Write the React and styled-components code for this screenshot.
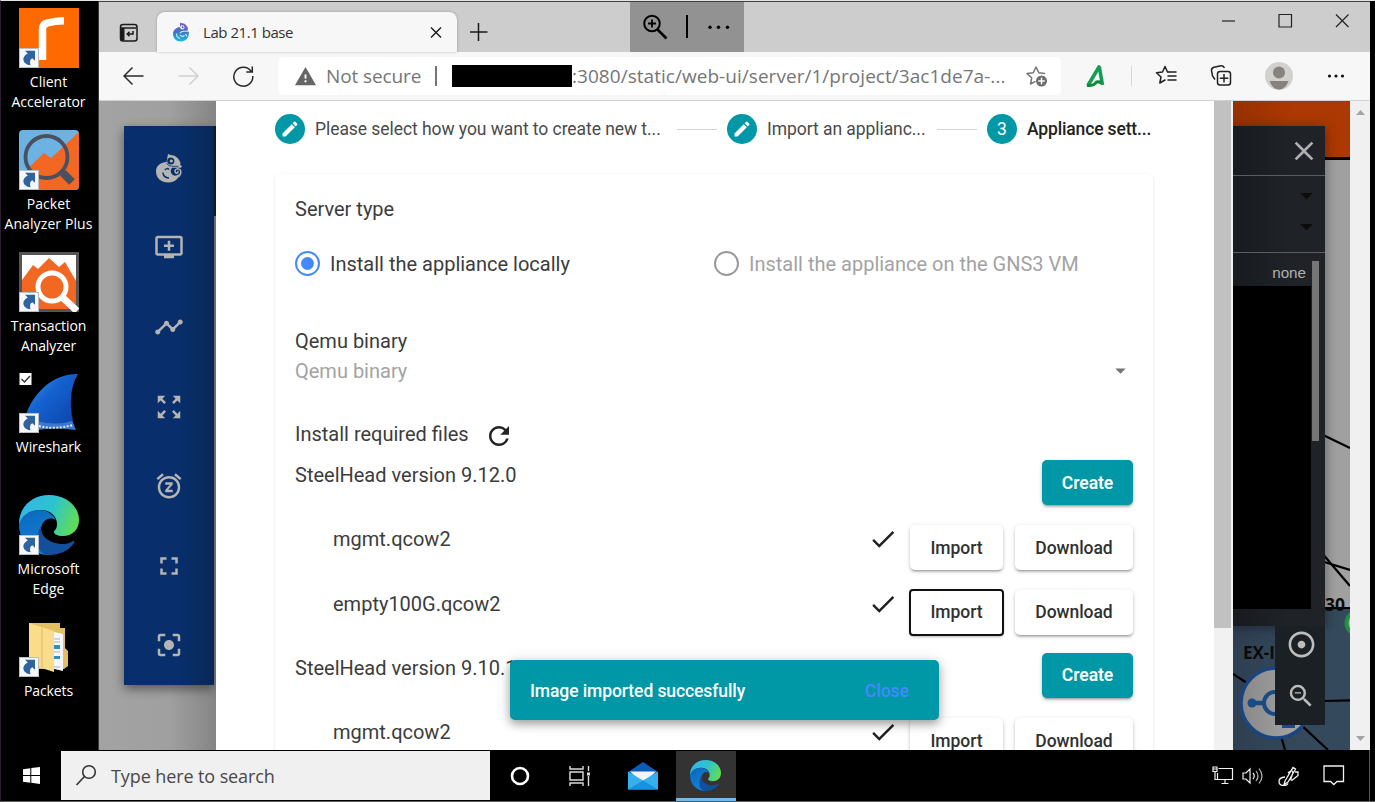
import React from "react";
import styled, { createGlobalStyle, css } from "styled-components";
import {
  MdEdit,
  MdRefresh,
  MdDone,
  MdAddToQueue,
  MdTimeline,
  MdZoomOutMap,
  MdSnooze,
  MdFullscreen,
  MdCenterFocusStrong,
  MdAdjust,
  MdZoomOut,
  MdClose,
  MdArrowDropDown,
  MdWarning,
} from "react-icons/md";

const TEAL = "#0097a7";
const SYSTEM_FONT = '"Open Sans", "Noto Sans", sans-serif';

const GlobalStyle = createGlobalStyle`
  * { box-sizing: border-box; }
  body { margin: 0; background: #000; overflow: hidden; }
  button { font: inherit; border: 0; padding: 0; background: none; }
  svg { display: block; flex: none; }
`;

const Screen = styled.div`
  width: 1375px;
  height: 802px;
  display: flex;
  flex-direction: column;
  background: #000;
  border-top: 1px solid #e4e4e4;
  border-left: 1px solid #2b1c2f;
  border-bottom: 1px solid #5c5c5c;
  font-family: ${SYSTEM_FONT};
`;

const Workspace = styled.div`
  display: flex;
  height: 749px;
`;

/* Desktop shortcuts */

const Desktop = styled.div`
  width: 98px;
  padding: 7px 2px 0 0;
  border-right: 1px solid #3a3a3a;
  flex: none;
`;

const Shortcut = styled.div`
  height: 121.8px;
  display: flex;
  flex-direction: column;
  align-items: center;
`;

const ShortcutIcon = styled.div`
  position: relative;
  width: 60px;
  height: 60px;
`;

const ShortcutArrow = styled.svg`
  position: absolute;
  left: 0;
  bottom: 0;
`;

const ShortcutLabel = styled.div`
  margin-top: 4px;
  color: #fff;
  font-size: 14px;
  line-height: 20px;
  letter-spacing: ${(p) => p.$spacing || "0"};
  text-align: center;
  white-space: pre;
`;

/* Browser window */

const Browser = styled.div`
  width: 1271px;
  display: flex;
  flex-direction: column;
  border-top: 1px solid #3c423c;
  background: #f7f7f7;
`;

const TitleBar = styled.div`
  height: 50px;
  display: flex;
  background: #cdcdcd;
`;

const TabActions = styled.div`
  width: 58px;
  display: flex;
  align-items: center;
  justify-content: center;
  padding: 11px 0 0 2px;
`;

const Tab = styled.div`
  width: 300px;
  height: 40px;
  margin-top: 10px;
  padding: 0 15px;
  display: flex;
  align-items: center;
  background: #f7f7f7;
  border-radius: 8px 8px 0 0;
  box-shadow: 0 0 3px rgba(0, 0, 0, 0.25);
`;

const TabTitle = styled.span`
  margin-left: 13px;
  flex: 1;
  padding-bottom: 1px;
  font-size: 15px;
  letter-spacing: -0.45px;
  color: #333;
`;

const NewTab = styled.div`
  padding: 20px 0 0 12px;
  width: 173px;
`;

const ZoomWidget = styled.div`
  width: 114px;
  height: 50px;
  background: #929292;
`;

const WindowButtons = styled.div`
  flex: 1;
  display: flex;
  justify-content: flex-end;
  align-items: flex-start;
  padding: 11px 20px 0 0;
  gap: 41px;
`;

const AddressRow = styled.div`
  height: 49px;
  display: flex;
  align-items: center;
  border-bottom: 1px solid #d2d2d2;
`;

const NavButtons = styled.div`
  width: 179px;
  display: flex;
  padding-left: 24px;
  gap: 33px;
`;

const AddressField = styled.div`
  width: 783px;
  height: 38px;
  padding: 0 12px 0 16px;
  display: flex;
  align-items: center;
  background: #fff;
  border-radius: 5px;
  font-size: 19px;
  color: #767676;
`;

const SecurityLabel = styled.span`
  width: 111px;
  margin-left: 9px;
  padding-right: 11px;
  border-right: 2px solid #767676;
  height: 20px;
  line-height: 20px;
  letter-spacing: -0.1px;
  white-space: nowrap;
`;

const Redaction = styled.span`
  width: 120px;
  height: 22px;
  margin: 0 0 1px 15px;
  background: #000;
`;

const Url = styled.span`
  flex: 1;
  white-space: nowrap;
  letter-spacing: 0.04px;
`;

const ToolbarIcons = styled.div`
  flex: 1;
  display: flex;
  align-items: center;
  padding-left: 24px;
`;

const ToolbarItem = styled.span`
  margin-left: ${(p) => p.$gap || 31}px;
`;

/* Page */

const Page = styled.div`
  height: 649px;
  display: flex;
  overflow: hidden;
`;

const MapLeft = styled.div`
  width: 117px;
  padding: 25px 0 0 25px;
  display: flex;
  align-items: flex-start;
  background: linear-gradient(90deg, #a3a3a3 0, #a0a0a0 60%, #858585 100%);
`;

const SideMenu = styled.nav`
  width: 90px;
  height: 559px;
  padding-top: 2px;
  display: flex;
  flex-direction: column;
  color: #b4b4b4;
  background: linear-gradient(90deg, #082f6c 60%, #082858 100%);
  border-right: 1px solid #0a2450;
  box-shadow: 0 4px 10px rgba(0, 0, 0, 0.45);
`;

const MapEdge = styled.div`
  width: 2px;
  height: 90px;
  background: #101c24;
`;

const SideItem = styled.div`
  height: 79.6px;
  display: flex;
  align-items: center;
  justify-content: center;
`;

const Dialog = styled.main`
  position: relative;
  width: 998px;
  padding: 13px 61px 0 59px;
  background: #fff;
  overflow: hidden;
  font-family: Roboto, sans-serif;
  font-size: 20px;
  color: #3c3c3c;
`;

const Stepper = styled.div`
  height: 30px;
  display: flex;
  align-items: center;
  font-size: 17.5px;
  letter-spacing: -0.06px;
`;

const StepCircle = styled.span`
  width: 30px;
  height: 30px;
  margin-right: 10px;
  display: flex;
  align-items: center;
  justify-content: center;
  flex: none;
  border-radius: 50%;
  background: ${TEAL};
  color: #fff;
`;

const StepLabel = styled.span`
  width: ${(p) => p.$width}px;
  flex: none;
  white-space: nowrap;
  color: ${(p) => (p.$active ? "#222" : "#4a4a4a")};
  font-weight: ${(p) => (p.$active ? 500 : 400)};
  letter-spacing: ${(p) => (p.$active ? "-0.15px" : "inherit")};
`;

const StepLine = styled.span`
  width: 40px;
  height: 1px;
  margin: 0 10px 0 ${(p) => p.$before}px;
  background: #d4d4d4;
`;

const Card = styled.section`
  height: 640px;
  margin-top: 30px;
  padding: 23px 20px 0;
  border-radius: 5px;
  box-shadow: 0 1px 3px rgba(0, 0, 0, 0.14);
`;

const Line = styled.div`
  height: ${(p) => p.$height}px;
  margin-top: ${(p) => p.$top || 0}px;
  display: flex;
  align-items: center;
  color: ${(p) => (p.$muted ? "#a3a3a3" : "inherit")};
  ${(p) => p.$between && css`justify-content: space-between;`}
`;

const Reload = styled.span`
  margin: 4px 0 0 15px;
  color: #222;
`;

const SelectArrow = styled.span`
  margin-bottom: 2px;
  color: #757575;
`;

const RadioRow = styled.div`
  height: 50px;
  margin-top: 17px;
  display: grid;
  grid-template-columns: 419px 1fr;
  align-items: center;
`;

const Radio = styled.label`
  display: flex;
  align-items: center;
  gap: 10px;
  line-height: 26px;
  padding-top: 1px;
  color: ${(p) => (p.$disabled ? "#a3a3a3" : "#3c3c3c")};
`;

const RadioMark = styled.span`
  width: 25px;
  height: 25px;
  display: flex;
  align-items: center;
  justify-content: center;
  border: 2.5px solid ${(p) => (p.$checked ? "#448aff" : "#9a9a9a")};
  border-radius: 50%;
  &::after {
    content: "";
    width: 13px;
    height: 13px;
    border-radius: 50%;
    background: ${(p) => (p.$checked ? "#448aff" : "transparent")};
  }
`;

const FileRow = styled.div`
  height: 64.3px;
  display: flex;
  align-items: flex-start;
  padding-left: ${(p) => (p.$nested ? 38 : 0)}px;
`;

const FileName = styled.span`
  flex: 1;
  line-height: 30px;
`;

const RowCheck = styled.span`
  margin: 0 12px 0 0;
  color: #222;
`;

const Button = styled.button`
  width: ${(p) => p.$width}px;
  height: 45px;
  margin: ${(p) => (p.$primary ? 0 : 1)}px 0 0 ${(p) => p.$gap || 0}px;
  border-radius: 5px;
  font-size: 17.5px;
  font-weight: ${(p) => (p.$primary ? 600 : 500)};
  letter-spacing: -0.05px;
  color: ${(p) => (p.$primary ? "#fff" : "#303030")};
  background: ${(p) => (p.$primary ? TEAL : "#fff")};
  box-shadow: 0 3px 2px -2px rgba(0, 0, 0, 0.22), 0 2px 3px rgba(0, 0, 0, 0.16),
    0 1px 5px rgba(0, 0, 0, 0.12);
  ${(p) =>
    p.$focused &&
    css`
      outline: 2px solid #111;
      outline-offset: -1px;
      border-radius: 3px;
    `}
`;

const Snackbar = styled.div`
  position: absolute;
  left: 294px;
  top: 559px;
  width: 429px;
  height: 60px;
  padding: 2px 30px 0 20px;
  display: flex;
  align-items: center;
  justify-content: space-between;
  border-radius: 5px;
  background: ${TEAL};
  box-shadow: 0 4px 8px rgba(0, 0, 0, 0.3), 0 2px 16px rgba(0, 0, 0, 0.14);
  color: #fff;
  font-size: 17.5px;
  font-weight: 500;
  letter-spacing: -0.09px;
`;

const SnackAction = styled.span`
  color: #448aff;
  letter-spacing: 0;
`;

const DialogScroll = styled.div`
  width: 19px;
  padding: 0 2px 0 0;
  background: #f1f1f1;
`;

const DialogThumb = styled.div`
  height: 527px;
  background: #c1c1c1;
`;

const MapRight = styled.div`
  position: relative;
  width: 117px;
  height: 649px;
  overflow: hidden;
`;

const ConsolePanel = styled.div`
  position: absolute;
  left: 0;
  top: 25px;
  width: 92px;
  height: 500px;
  display: flex;
  flex-direction: column;
  color: #b0b0b0;
  background: linear-gradient(90deg, #171b1f, #1f2328 60%);
  box-shadow: 0 2px 12px rgba(0, 0, 0, 0.4);
`;

const ConsoleHeader = styled.div`
  height: 50px;
  padding-right: 5px;
  display: flex;
  align-items: center;
  justify-content: flex-end;
  border-bottom: 1px solid #5a5d60;
`;

const ConsoleFilters = styled.div`
  height: 77px;
  padding: 4px 3px 0 0;
  display: flex;
  flex-direction: column;
  align-items: flex-end;
  color: #0c0c0c;
  border-bottom: 1px solid #5a5d60;
`;

const ConsoleBody = styled.div`
  display: flex;
  padding-top: 8px;
`;

const ConsoleTable = styled.div`
  width: 79px;
`;

const ConsoleValue = styled.div`
  height: 25px;
  padding-right: 6px;
  text-align: right;
  line-height: 23px;
  font-family: "Liberation Sans", Arial, sans-serif;
  font-size: 15.2px;
`;

const ConsoleOutput = styled.div`
  height: 323px;
  width: 78px;
  background: #000;
`;

const ConsoleThumb = styled.div`
  width: 7px;
  height: 180px;
  background: #757575;
`;

const MapTools = styled.div`
  position: absolute;
  left: 42px;
  top: 525px;
  width: 50px;
  height: 99px;
  padding: 3px 0 0 2px;
  display: flex;
  flex-direction: column;
  align-items: center;
  gap: 21px;
  color: #bdbdbd;
  background: #1b2024;
`;

const PageScroll = styled.div`
  width: 20px;
  display: flex;
  flex-direction: column;
  justify-content: space-between;
  align-items: center;
  padding: 9px 0 9px;
  background: #f0f0f0;
`;

/* Taskbar */

const Taskbar = styled.div`
  height: 51px;
  display: flex;
  align-items: center;
  background: #000;
`;

const Start = styled.div`
  width: 60px;
  display: flex;
  justify-content: center;
`;

const Search = styled.div`
  width: 429px;
  height: 49px;
  padding-left: 14px;
  display: flex;
  align-items: center;
  gap: 13px;
  background: #f0f0f0;
  color: #484848;
  font-size: 18px;
  letter-spacing: -0.1px;
`;

const Task = styled.div`
  width: ${(p) => p.$width}px;
  height: 50px;
  display: flex;
  align-items: center;
  justify-content: center;
  ${(p) =>
    p.$active &&
    css`
      background: #333;
      border-bottom: 3px solid #76b9ed;
      padding: 3px 2px 0 0;
    `}
`;

const Tray = styled.div`
  flex: 1;
  height: 100%;
  display: flex;
  align-items: center;
  justify-content: flex-end;
  margin-right: 5px;
  padding-right: 24px;
  border-right: 1px solid #555;
`;

const TrayIcon = styled.span`
  margin-left: ${(p) => p.$gap}px;
`;

/* Drawings */

function ArrowBadge() {
  return (
    <ShortcutArrow width="20" height="20" viewBox="0 0 20 20">
      <rect x=".5" y=".5" width="19" height="19" fill="#f5f7f9" stroke="#b9bec4" />
      <path d="M6 2.800h10v10L13.300 10.200C11 11.500 10.500 13.500 11.500 17.300C4 16.500 1.500 9.500 8.800 5.600z" fill="#2e63a0" />
    </ShortcutArrow>
  );
}

function ClientArt() {
  return (
    <svg width="60" height="60" viewBox="0 0 60 60">
      <rect width="60" height="60" fill="#ff6a00" />
      <path d="M23.500 52V21q0-5 5-6Q36 13 45 12.800" fill="none" stroke="#fff" strokeWidth="7.500" strokeLinejoin="round" />
    </svg>
  );
}

function PacketArt() {
  return (
    <svg width="60" height="60" viewBox="0 0 60 60">
      <rect width="60" height="60" rx="4" fill="#6cb2e2" />
      <path d="M0 47L25 23l7 5L60 2v54q0 4-4 4H0z" fill="#f26722" />
      <circle cx="27.500" cy="27" r="21" fill="none" stroke="#4a5060" strokeWidth="3.800" />
      <path d="M42 41l5 5" stroke="#4a5060" strokeWidth="5" />
      <path d="M44 43l9 9" stroke="#4a5060" strokeWidth="8" />
    </svg>
  );
}

function TransactionArt() {
  return (
    <svg width="60" height="60" viewBox="0 0 60 60">
      <rect x="1.500" y="1.500" width="57" height="57" fill="#fff" stroke="#555" strokeWidth="3" />
      <path d="M3 28L14 13l5 4L30 6l10 9 6-5 11 19v28H3z" fill="#f26722" />
      <circle cx="33" cy="35" r="14" fill="#f26722" stroke="#fff" strokeWidth="5" />
      <path d="M43 45l15 14" stroke="#fff" strokeWidth="7" />
    </svg>
  );
}

function WiresharkArt() {
  return (
    <svg width="60" height="60" viewBox="0 0 60 60">
      <defs>
        <linearGradient id="fin" x1="0" y1="0" x2="1" y2="1">
          <stop offset="0" stopColor="#4aa0f0" />
          <stop offset=".4" stopColor="#1563d0" />
          <stop offset="1" stopColor="#0a3fa8" />
        </linearGradient>
      </defs>
      <path d="M5 50C10 22 34 0 59 1c-9 15-9 35-3 55C40 50 20 59 5 50z" fill="url(#fin)" />
      <path d="M18 48q19 5 35 0l4 9q-20-3-39 0z" fill="#3f78c8" />
      <path d="M20 53q14 4 34-1" stroke="#dbe8f8" strokeWidth="2" strokeDasharray="2 1.500" fill="none" />
      <rect x=".5" y="0" width="12" height="12" fill="#fff" />
      <path d="M2.500 6l3 3L11 3" fill="none" stroke="#333" strokeWidth="1.400" />
    </svg>
  );
}

function EdgeArt({ size = 60, id }) {
  return (
    <svg width={size} height={size} viewBox="0 0 60 60">
      <defs>
        <linearGradient id={`${id}-top`} x1="0" y1=".3" x2="1" y2=".6">
          <stop offset="0" stopColor="#35b5e8" />
          <stop offset=".5" stopColor="#2cc3cf" />
          <stop offset="1" stopColor="#62dd50" />
        </linearGradient>
        <linearGradient id={`${id}-side`} x1="0" y1="0" x2=".6" y2="1">
          <stop offset="0" stopColor="#0d65b8" />
          <stop offset="1" stopColor="#0f86df" />
        </linearGradient>
      </defs>
      <path d="M0 30C-.5 12 13 0 30 0c18 0 30 12 30 25 0 10-7 16-16 16-6 0-9-2-9-4s3-2 3-8c0-8-7-14-16-14C11 15 3 22 0 30z" fill={`url(#${id}-top)`} />
      <path d="M0 30c2-9 10-15 20-15 9 0 14 5 17 10-7-4-14 0-15 9-1 11 9 20 21 18C37 58 33 60 30 60 13 60 0 47 0 30z" fill={`url(#${id}-side)`} />
      <path d="M22 31c-1 12 11 18 22 18 5 0 8-2 10-3 1-.5 2 .5 1 2-5 8-15 12-25 12C16 60 16 40 22 31z" fill="#124f9c" />
    </svg>
  );
}

function FolderArt() {
  return (
    <svg width="60" height="60" viewBox="0 0 60 60">
      <path d="M10 6h31v5h5v20l3 3v15l-4 3H10z" fill="#e4bf62" />
      <path d="M31 14l13 3v37l-13-3z" fill="#f4f6f8" />
      <path d="M34 22h7m-7 3h7m-7 10h7m-7 15h7" stroke="#a9b4bd" />
      <path d="M34 28h7v4h-7zM34 39h7v3h-7z" fill="#2e8fc7" />
      <path d="M10 6l25 8v41L10 47z" fill="#fbdc8b" />
      <path d="M22 11h2v40l-2-1z" fill="#eccb78" />
    </svg>
  );
}

function Chameleon({ size, color, hole }) {
  return (
    <svg width={size} height={size} viewBox="0 0 30 30" fill="none">
      <path
        d="M14 1l2.500 1C21 2 25 5 26.500 10l-.3 2 1.800 1-1 1.800H18q-2 2-1 5 2 4 6 2.500l2.500-1.500C24.500 26 21 29.500 14.500 29.500 7 29.500 2 25 2 18.500 2 13 6 9.500 12.500 9z"
        fill={color}
      />
      <circle cx="16.800" cy="8" r="3.600" fill={hole} />
      <circle cx="17.300" cy="8" r="1.600" fill={color} />
      <path d="M12.500 10.500q2 3 6 2.800h6" stroke={hole} strokeWidth=".8" />
      <path d="M11 17q2-2.500 4-.5M9 19.500q0 5 6 5.500" stroke={hole} strokeWidth="1.500" />
      <path d="M24.500 24q3.500-4 1.800-7-2.500-2.500-5 0-1 3 1.500 3.200 1.800-.7.8-2.200" stroke={color} strokeWidth="1.500" />
    </svg>
  );
}

function StarOutline({ lines, plus }) {
  const color = plus ? "#777" : "#222";
  return (
    <svg width="24" height="24" viewBox="0 0 24 24" fill="none" stroke={color} strokeWidth="1.500" strokeLinejoin="round" strokeLinecap="round">
      {lines ? (
        <>
          <path d="M13 8h-.5L10 2.500 7.500 8l-6 .8L6 13l-1.200 6L10 16" />
          <path d="M13 8h8M13 12h8M13 16h8" />
        </>
      ) : (
        <>
          <path d="M19.500 9.500l-5.700-.8L11 3 8.300 8.700 2 9.600l4.700 4.200L5.500 20l4.500-2.400" />
          <circle cx="16.500" cy="17" r="5.500" fill="#6e6e6e" stroke="none" />
          <path d="M16.500 14.300v5.400M13.800 17h5.400" stroke="#fff" />
        </>
      )}
    </svg>
  );
}

function Dots() {
  return (
    <svg width="20" height="8" viewBox="0 0 20 8" fill="#111">
      <circle cx="2.500" cy="4" r="1.600" />
      <circle cx="9" cy="4" r="1.600" />
      <circle cx="15.500" cy="4" r="1.600" />
    </svg>
  );
}

function TopologyMap() {
  return (
    <svg width="117" height="649" viewBox="0 0 117 649">
      <defs>
        <linearGradient id="zone-a">
          <stop offset="0" stopColor="#963100" />
          <stop offset=".5" stopColor="#ac3803" />
        </linearGradient>
        <linearGradient id="zone-b">
          <stop offset="0" stopColor="#2f3f52" />
          <stop offset=".6" stopColor="#34495b" />
        </linearGradient>
        <linearGradient id="node">
          <stop offset="0" stopColor="#888" />
          <stop offset="1" stopColor="#aaa" />
        </linearGradient>
      </defs>
      <rect width="117" height="649" fill="#a0a0a0" />
      <rect width="117" height="57" fill="url(#zone-a)" />
      <path d="M0 57.500h117" stroke="#000" strokeWidth="3" />
      <rect y="507" width="117" height="142" fill="url(#zone-b)" />
      <path d="M88 333l29 14M88 451l29 34M88 460l29 9M80 507h37M0 573l14 9M48 635l4 14M66 622l29 27M90 600l27-.6" stroke="#000" strokeWidth="2.200" />
      <text x="92" y="510" fontSize="17.500" fontWeight="700" fontFamily="Open Sans, sans-serif" fill="#0c0c0c">30</text>
      <text x="10" y="558" fontSize="17" fontWeight="700" fontFamily="Open Sans, sans-serif" fill="#0a0a0a">EX-I</text>
      <circle cx="125" cy="522" r="11.500" fill="#a5b8a8" stroke="#1c9140" strokeWidth="4" />
      <circle cx="43" cy="602" r="35" fill="url(#node)" stroke="#1b4581" strokeWidth="3.500" />
      <path d="M18 602h12M56 602h15" stroke="#1b4a85" strokeWidth="4.500" />
      <circle cx="19" cy="602" r="4.500" fill="#1b4a85" />
      <circle cx="42" cy="602" r="11" fill="none" stroke="#1b4a85" strokeWidth="4" />
      <path d="M49 625h13" stroke="#1b4a85" strokeWidth="4" />
    </svg>
  );
}

const shortcuts = [
  { label: "Client\nAccelerator", art: <ClientArt /> },
  { label: "Packet\nAnalyzer Plus", art: <PacketArt />, spacing: "0.1px" },
  { label: "Transaction\nAnalyzer", art: <TransactionArt />, spacing: "-0.1px" },
  { label: "Wireshark", art: <WiresharkArt />, spacing: "-0.1px" },
  { label: "Microsoft\nEdge", art: <EdgeArt id="edge-desktop" /> },
  { label: "Packets", art: <FolderArt />, spacing: "-0.1px" },
];

const menuIcons = [MdAddToQueue, MdTimeline, MdZoomOutMap, MdSnooze, MdFullscreen, MdCenterFocusStrong];

const windowGlyphs = ["M2 8h13", "M2 1.500h12.500v12.500H2z", "M2 1.500l12.500 12.500M14.500 1.500L2 14"];

const files = [
  { version: "SteelHead version 9.12.0" },
  { name: "mgmt.qcow2" },
  { name: "empty100G.qcow2", focused: true },
  { version: "SteelHead version 9.10.1" },
  { name: "mgmt.qcow2" },
];

function BrowserChrome() {
  return (
    <>
      <TitleBar>
        <TabActions>
          <svg width="20" height="20" viewBox="0 0 20 20" fill="none" stroke="#1a1a1a">
            <rect x="1.500" y="1.500" width="16.500" height="16.500" rx="2.500" strokeWidth="1.500" />
            <path d="M1.500 5h16" strokeWidth="1.500" />
            <path d="M3.500 5v12.500" strokeWidth="4" />
            <path d="M14 8v3H8.500M10.500 8.800l-2.200 2.200 2.200 2.200" strokeWidth="1.500" />
          </svg>
        </TabActions>
        <Tab>
          <svg width="18" height="20" viewBox="0 0 18 20">
            <defs>
              <linearGradient id="favicon" x1="0" y1="0" x2="0" y2="1">
                <stop offset="0" stopColor="#8858b4" />
                <stop offset=".5" stopColor="#3d78c4" />
                <stop offset="1" stopColor="#16bde0" />
              </linearGradient>
            </defs>
            <path d="M8 .5l2 .8c3 0 5 2 6 5L15.500 9l1.300 1c.5 6-3 9.500-8 9.500C4 19.500 1 16 1 12c0-4 3-6.500 7-7z" fill="url(#favicon)" />
            <circle cx="10.300" cy="5.300" r="2.100" fill="#fff" />
            <circle cx="10.600" cy="5.300" r="1" fill="#6040a0" />
            <path d="M16 9.300h-4q-3.500.2-4 2M8 13q2 2.500 4.500.5M4.500 11.500q0 4 3.500 5M13 12.500q2 0 1.500 2" fill="none" stroke="#cfe8fa" strokeWidth="1.100" />
          </svg>
          <TabTitle>Lab 21.1 base</TabTitle>
          <svg width="12" height="12" viewBox="0 0 12 12" stroke="#1a1a1a" strokeWidth="1.400">
            <path d="M1 1.500l10 10M11 1.500L1 11.500" />
          </svg>
        </Tab>
        <NewTab>
          <svg width="20" height="20" viewBox="0 0 20 20" stroke="#1a1a1a" strokeWidth="1.500">
            <path d="M9.500 1v18M1 10h17.500" />
          </svg>
        </NewTab>
        <ZoomWidget>
          <svg width="114" height="50" viewBox="0 0 114 50" fill="none" stroke="#000" strokeWidth="2">
            <circle cx="22" cy="21.500" r="7.800" />
            <path d="M18 21.500h8M22 17.500v8" strokeWidth="1.800" />
            <path d="M27.500 27.500l9 9" strokeWidth="2.600" />
            <path d="M57 13v23" />
            <g fill="#000" stroke="none">
              <circle cx="80" cy="25.300" r="1.700" />
              <circle cx="88.500" cy="25.300" r="1.700" />
              <circle cx="97.500" cy="25.300" r="1.700" />
            </g>
          </svg>
        </ZoomWidget>
        <WindowButtons>
          {windowGlyphs.map((d) => (
            <svg key={d} width="16" height="16" viewBox="0 0 16 16" fill="none" stroke="#222" strokeWidth="1.200">
              <path d={d} />
            </svg>
          ))}
        </WindowButtons>
      </TitleBar>
      <AddressRow>
        <NavButtons>
          <svg width="22" height="22" viewBox="0 0 22 22" fill="none" stroke="#2a2a2a" strokeWidth="1.500">
            <path d="M20.500 11H1M9.500 2.500L1 11l8.500 8.500" />
          </svg>
          <svg width="22" height="22" viewBox="0 0 22 22" fill="none" stroke="#d0d0d0" strokeWidth="1.500">
            <path d="M.5 11H20M11.500 2.500l8.500 8.500-8.500 8.500" />
          </svg>
          <svg width="22" height="22" viewBox="0 0 22 22" fill="none" stroke="#2a2a2a" strokeWidth="1.500">
            <path d="M18.300 6.500a9.500 9.500 0 1 0 1.500 4.500M19.300 1.500v5.500h-6" />
          </svg>
        </NavButtons>
        <AddressField>
          <MdWarning size={23} color="#666" />
          <SecurityLabel>Not secure</SecurityLabel>
          <Redaction />
          <Url>:3080/static/web-ui/server/1/project/3ac1de7a-...</Url>
          <StarOutline plus />
        </AddressField>
        <ToolbarIcons>
          <svg width="22" height="22" viewBox="0 0 22 22" fill="none">
            <path d="M14 2L3.500 19.500" stroke="#149c50" strokeWidth="3.600" strokeLinecap="round" />
            <path d="M14.300 2L17.500 20" stroke="#149c50" strokeWidth="3.600" />
            <path d="M2 20.500q7 .5 9.500-3.500 3-.5 5 1" stroke="#0e8a3c" strokeWidth="3" />
          </svg>
          <svg width="48" height="22" viewBox="0 0 48 22" stroke="#d7d7d7">
            <path d="M24.500 1v20" />
          </svg>
          <StarOutline lines />
          <ToolbarItem>
            <svg width="24" height="24" viewBox="0 0 24 24" fill="none" stroke="#222" strokeWidth="1.500">
              <path d="M5 15.500L2.500 12 1.500 6.500Q1.300 4 4 3.300l7-1.500q2-.3 3.500 2" />
              <rect x="7.500" y="7.500" width="13" height="13.500" rx="2.500" />
              <path d="M14 10v8.500M9.800 14.200h8.500" />
            </svg>
          </ToolbarItem>
          <ToolbarItem>
            <svg width="30" height="30" viewBox="0 0 30 30">
              <circle cx="14" cy="15" r="14" fill="#d3d1ce" />
              <circle cx="14" cy="11.500" r="6" fill="#85827f" />
              <path d="M4.500 20h19q-3 8.500-9.500 8.500T4.500 20z" fill="#85827f" />
            </svg>
          </ToolbarItem>
          <ToolbarItem $gap={32}><Dots /></ToolbarItem>
        </ToolbarIcons>
      </AddressRow>
    </>
  );
}

function ApplianceDialog() {
  return (
    <Dialog>
      <Stepper>
        <StepCircle><MdEdit size={20} /></StepCircle>
        <StepLabel $width={345}>Please select how you want to create new t...</StepLabel>
        <StepLine $before={17} />
        <StepCircle><MdEdit size={20} /></StepCircle>
        <StepLabel $width={157}>Import an applianc...</StepLabel>
        <StepLine $before={13} />
        <StepCircle>3</StepCircle>
        <StepLabel $width={124} $active>Appliance sett...</StepLabel>
      </Stepper>
      <Card>
        <Line $height={24}>Server type</Line>
        <RadioRow>
          <Radio><RadioMark $checked />Install the appliance locally</Radio>
          <Radio $disabled><RadioMark />Install the appliance on the GNS3 VM</Radio>
        </RadioRow>
        <Line $height={30} $top={38}>Qemu binary</Line>
        <Line $height={30} $muted $between>
          Qemu binary
          <SelectArrow><MdArrowDropDown size={25} /></SelectArrow>
        </Line>
        <Line $height={42} $top={27}>
          Install required files
          <Reload><MdRefresh size={30} /></Reload>
        </Line>
        <Line $height={5} />
        {files.map((f, i) =>
          f.version ? (
            <FileRow key={i}>
              <FileName>{f.version}</FileName>
              <Button $primary $width={91}>Create</Button>
            </FileRow>
          ) : (
            <FileRow key={i} $nested>
              <FileName>{f.name}</FileName>
              <RowCheck><MdDone size={30} /></RowCheck>
              <Button $width={93} $focused={f.focused}>Import</Button>
              <Button $width={118} $gap={12}>Download</Button>
            </FileRow>
          )
        )}
      </Card>
      <Snackbar>
        Image imported succesfully
        <SnackAction>Close</SnackAction>
      </Snackbar>
    </Dialog>
  );
}

export default function App() {
  return (
    <>
      <GlobalStyle />
      <Screen>
        <Workspace>
          <Desktop>
            {shortcuts.map((s) => (
              <Shortcut key={s.label}>
                <ShortcutIcon>
                  {s.art}
                  <ArrowBadge />
                </ShortcutIcon>
                <ShortcutLabel $spacing={s.spacing}>{s.label}</ShortcutLabel>
              </Shortcut>
            ))}
          </Desktop>
          <Browser>
            <BrowserChrome />
            <Page>
              <MapLeft>
                <SideMenu>
                  <SideItem>
                    <Chameleon size={30} color="#b4b4b4" hole="#082f6c" />
                  </SideItem>
                  {menuIcons.map((Icon, i) => (
                    <SideItem key={i}>
                      <Icon size={30} />
                    </SideItem>
                  ))}
                </SideMenu>
                <MapEdge />
              </MapLeft>
              <ApplianceDialog />
              <DialogScroll><DialogThumb /></DialogScroll>
              <MapRight>
                <TopologyMap />
                <ConsolePanel>
                  <ConsoleHeader><MdClose size={32} /></ConsoleHeader>
                  <ConsoleFilters>
                    <MdArrowDropDown size={31} />
                    <MdArrowDropDown size={31} />
                  </ConsoleFilters>
                  <ConsoleBody>
                    <ConsoleTable>
                      <ConsoleValue>none</ConsoleValue>
                      <ConsoleOutput />
                    </ConsoleTable>
                    <ConsoleThumb />
                  </ConsoleBody>
                </ConsolePanel>
                <MapTools>
                  <MdAdjust size={31} />
                  <MdZoomOut size={30} />
                </MapTools>
              </MapRight>
              <PageScroll>
                <svg width="9" height="5" viewBox="0 0 9 5"><path d="M0 5l4.500-5L9 5z" fill="#a3a3a3" /></svg>
                <svg width="9" height="5" viewBox="0 0 9 5"><path d="M0 0l4.500 5L9 0z" fill="#a3a3a3" /></svg>
              </PageScroll>
            </Page>
          </Browser>
        </Workspace>
        <Taskbar>
          <Start>
            <svg width="17" height="17" viewBox="0 0 17 17" fill="#fff">
              <path d="M0 2.300L7.300 1.300V8H0zM8.300 1.100L17 0v8H8.300zM0 9h7.300v6.700L0 14.700zM8.300 9H17v8l-8.700-1.200z" />
            </svg>
          </Start>
          <Search>
            <svg width="23" height="23" viewBox="0 0 23 23" fill="none" stroke="#333" strokeWidth="1.600">
              <circle cx="14" cy="8" r="6.300" />
              <path d="M9.500 12.500L1.500 21" />
            </svg>
            Type here to search
          </Search>
          <Task $width={60}>
            <svg width="22" height="22" viewBox="0 0 22 22"><circle cx="11" cy="11" r="8" fill="none" stroke="#fff" strokeWidth="2.600" /></svg>
          </Task>
          <Task $width={60}>
            <svg width="22" height="20" viewBox="0 0 22 20" fill="none" stroke="#ddd" strokeWidth="1.400">
              <path d="M1 0v3h13V0M1 20v-3h13v3M1 6h13v8H1zM19.500 0v5M19.500 10v10" />
              <path d="M18 8h3" strokeWidth="3" />
            </svg>
          </Task>
          <Task $width={66}>
            <svg width="32" height="28" viewBox="0 0 32 28">
              <path d="M1 10L16 0l15 10-7 8H8z" fill="#0a5cb8" />
              <path d="M3 9.500h26l-13 12z" fill="#f4f4f4" />
              <path d="M1 9.500v18h30v-18l-15 9z" fill="#33b1ee" />
              <path d="M1 27.500h30L16 18.500z" fill="#1b8fe0" />
            </svg>
          </Task>
          <Task $width={60} $active><EdgeArt size={31} id="edge-task" /></Task>
          <Tray>
            <TrayIcon>
              <svg width="22" height="19" viewBox="0 0 22 19" fill="none" stroke="#f2f2f2" strokeWidth="1.200">
                <path d="M6.500 2.500h14v11h-15V7M13 13.500v4M9.500 17.500h7M1 1h4v4.500H1zM3 5.500v8h2.500M1 3h4" />
              </svg>
            </TrayIcon>
            <TrayIcon $gap={8}>
              <svg width="22" height="18" viewBox="0 0 22 18" fill="none" stroke="#f2f2f2" strokeWidth="1.200">
                <path d="M1 6h3l4-4v14l-4-4H1zM11 6q2.500 3 0 6" />
                <path d="M14 4q4 5 0 10M17 1.500q6 7.500 0 15" stroke="#bbb" />
              </svg>
            </TrayIcon>
            <TrayIcon $gap={14}>
              <svg width="22" height="20" viewBox="0 0 22 20" fill="none" stroke="#f2f2f2" strokeWidth="1.300">
                <path d="M7 15L15 1.500l2.500 1.500L10 16l-4 2.500zM10 7q4-4 5-.5l-2 6q-.5 3 2 1l5-4v-3.500h-3M7 11q-6 .5-6 4.500t5 4q3 0 4-2" />
              </svg>
            </TrayIcon>
            <TrayIcon $gap={23}>
              <svg width="22" height="21" viewBox="0 0 22 21" fill="none" stroke="#f2f2f2" strokeWidth="1.300">
                <path d="M1 1h19.500v15.500H14l-3.200 3-3.200-3H1z" />
              </svg>
            </TrayIcon>
          </Tray>
        </Taskbar>
      </Screen>
    </>
  );
}
